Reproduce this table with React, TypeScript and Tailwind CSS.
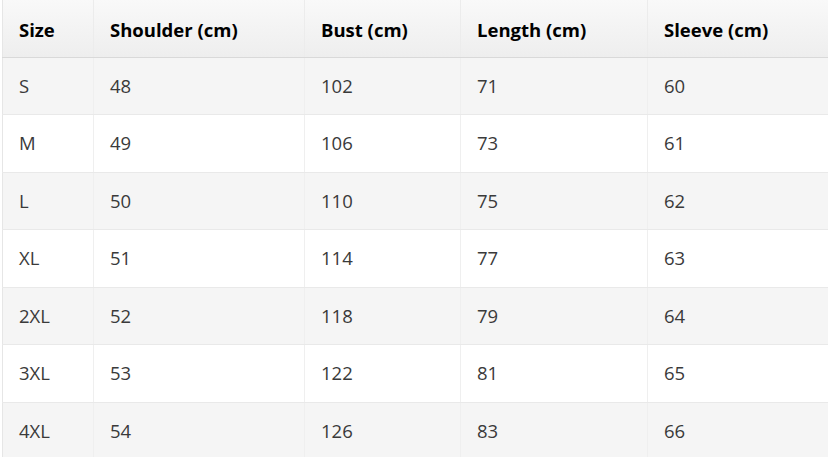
const headers = ['Size', 'Shoulder (cm)', 'Bust (cm)', 'Length (cm)', 'Sleeve (cm)'];

const rows = [
    ['S', '48', '102', '71', '60'],
    ['M', '49', '106', '73', '61'],
    ['L', '50', '110', '75', '62'],
    ['XL', '51', '114', '77', '63'],
    ['2XL', '52', '118', '79', '64'],
    ['3XL', '53', '122', '81', '65'],
    ['4XL', '54', '126', '83', '66'],
];

const widths = ['w-[91px]', 'w-[211px]', 'w-[156px]', 'w-[187px]', 'w-[183px]'];

const App = () => {
    return (
        <div className="w-[828px] h-[457px] overflow-hidden bg-white pl-[2px]" style={{ fontFamily: '"Open Sans", "Noto Sans", sans-serif' }}>
            <table className="border-collapse table-fixed w-[828px] border-l border-[#e6e6e6]">
                <thead>
                    <tr className="bg-gradient-to-b from-[#f9f9f9] to-[#eeeeee] h-[57px]">
                        {headers.map((h, i) => (
                            <th
                                key={h}
                                className={`${widths[i]} text-left font-bold text-[18.5px] leading-none text-black px-[16px] pt-[3px] border-b border-[#d9d9d9] ${i > 0 ? 'border-l border-l-[#ececec]' : ''}`}
                            >
                                {h}
                            </th>
                        ))}
                    </tr>
                </thead>
                <tbody>
                    {rows.map((r, ri) => (
                        <tr key={r[0]} className={`h-[57.5px] ${ri % 2 === 0 ? 'bg-[#f5f5f5]' : 'bg-white'}`}>
                            {r.map((c, ci) => (
                                <td
                                    key={ci}
                                    className={`px-[16px] text-[18.5px] leading-none text-[#3a3a3a] border-b border-[#e9e9e9] ${ci > 0 ? 'border-l border-l-[#efefef]' : ''}`}
                                >
                                    {c}
                                </td>
                            ))}
                        </tr>
                    ))}
                </tbody>
            </table>
        </div>
    );
};

export default App;
